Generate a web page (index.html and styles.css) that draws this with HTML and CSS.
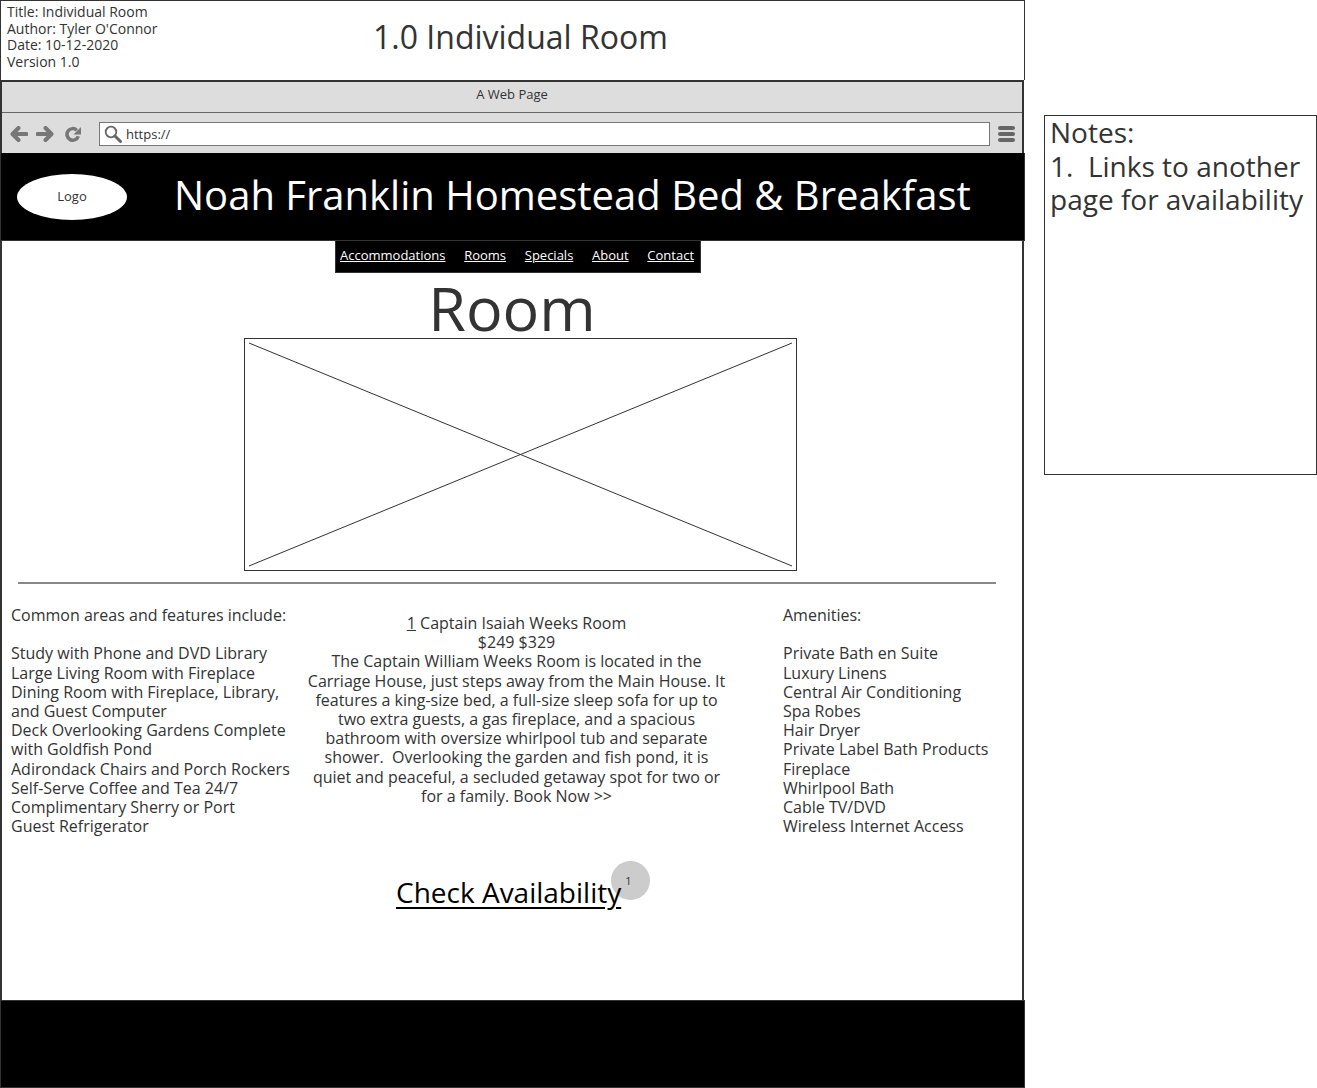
FILE: index.html
```html
<!DOCTYPE html>
<html lang="en">
<head>
    <meta charset="UTF-8">
    <meta name="viewport" content="width=device-width, initial-scale=1.0">
    <title>1.0 Individual Room</title>
    <link rel="stylesheet" href="styles.css">
</head>
<body>
<div class="sheet">
    <div class="wire">
        <!-- Document info -->
        <div class="doc-head">
            <div class="doc-meta">
                <div>Title: Individual Room</div>
                <div>Author: Tyler O'Connor</div>
                <div>Date: 10-12-2020</div>
                <div>Version 1.0</div>
            </div>
            <div class="doc-title">1.0 Individual Room</div>
        </div>

        <div class="browser">
            <div class="title-bar">A Web Page</div>
            <div class="tool-bar">
                <svg class="tool-icon" width="18" height="16" viewBox="0 0 18 16"><path d="M8.500 2 2.500 8l6 6M3 8h13.500" fill="none" stroke="#777" stroke-width="4" stroke-linecap="round" stroke-linejoin="round"/></svg>
                <svg class="tool-icon fwd" width="18" height="16" viewBox="0 0 18 16"><path d="M9.500 2l6 6-6 6M15 8H1.500" fill="none" stroke="#777" stroke-width="4" stroke-linecap="round" stroke-linejoin="round"/></svg>
                <svg class="tool-icon reload" width="16" height="16" viewBox="0 0 16 16"><path d="M13.300 10.200A5.800 5.800 0 1 1 11.800 4.200" fill="none" stroke="#777" stroke-width="3.500"/><path d="M16 1v7.500H8.500z" fill="#777"/></svg>
                <div class="address">
                    <svg width="18" height="18" viewBox="0 0 18 18"><circle cx="7" cy="7" r="5.300" fill="none" stroke="#666" stroke-width="1.800"/><path d="M11 11l5.500 5.500" stroke="#666" stroke-width="3" stroke-linecap="round"/></svg>
                    <span>https://</span>
                </div>
                <div class="menu-icon"><i></i><i></i><i></i></div>
            </div>

            <div class="site-head">
                <div class="logo">Logo</div>
                <div class="site-name">Noah Franklin Homestead Bed &amp; Breakfast</div>
            </div>
            <nav class="nav">
                <a>Accommodations</a>
                <a>Rooms</a>
                <a>Specials</a>
                <a>About</a>
                <a>Contact</a>
            </nav>

            <h1 class="room-title">Room</h1>
            <div class="photo">
                <svg width="100%" height="100%" viewBox="0 0 551 231" preserveAspectRatio="none"><path d="M4 4 547 227M547 4 4 227" stroke="#333" stroke-width="1" fill="none"/></svg>
            </div>
            <hr class="rule">

            <div class="columns">
                <div class="col-left">
                    Common areas and features include:<br><br>
                    Study with Phone and DVD Library<br>
                    Large Living Room with Fireplace<br>
                    Dining Room with Fireplace, Library, and Guest Computer<br>
                    Deck Overlooking Gardens Complete with Goldfish Pond<br>
                    Adirondack Chairs and Porch Rockers<br>
                    Self-Serve Coffee and Tea 24/7<br>
                    Complimentary Sherry or Port<br>
                    Guest Refrigerator
                </div>
                <div class="col-mid">
                    <u>1</u> Captain Isaiah Weeks Room<br>
                    $249 $329<br>
                    The Captain William Weeks Room is located in the Carriage House, just steps away from the Main House. It features a king-size bed, a full-size sleep sofa for up to two extra guests, a gas fireplace, and a spacious bathroom with oversize whirlpool tub and separate shower.&nbsp; Overlooking the garden and fish pond, it is quiet and peaceful, a secluded getaway spot for two or for a family. Book Now &gt;&gt;
                </div>
                <div class="col-right">
                    Amenities:<br><br>
                    Private Bath en Suite<br>
                    Luxury Linens<br>
                    Central Air Conditioning<br>
                    Spa Robes<br>
                    Hair Dryer<br>
                    Private Label Bath Products<br>
                    Fireplace<br>
                    Whirlpool Bath<br>
                    Cable TV/DVD<br>
                    Wireless Internet Access
                </div>
            </div>

            <div class="cta">
                <a class="cta-link">Check Availability<span class="badge">1</span></a>
            </div>

            <div class="site-foot"></div>
        </div>
    </div>

    <aside class="notes">
        Notes:<br>
        1.&nbsp; Links to another page for availability
    </aside>
</div>
</body>
</html>
```

FILE: styles.css
```css
body {
    margin: 0;
    font-family: "Open Sans", sans-serif;
    color: #333;
    background-color: #fff;
}
.sheet {
    display: flex;
    align-items: flex-start;
    width: 1317px;
    height: 1088px;
    overflow: hidden;
}
.wire {
    width: 1025px;
    flex: none;
}

/* Document info */
.doc-head {
    display: flex;
    box-sizing: border-box;
    height: 80px;
    border: 1px solid #333;
    border-bottom: none;
}
.doc-meta {
    width: 366px;
    padding: 3px 0 0 6px;
    font-size: 14px;
    line-height: 16.7px;
}
.doc-title {
    padding-top: 14px;
    font-size: 32px;
    line-height: 44px;
}

/* Browser window */
.browser {
    box-sizing: border-box;
    width: 1024px;
    border-left: 2px solid #333;
    border-right: 2px solid #333;
    border-top: 2px solid #333;
}
.title-bar {
    box-sizing: border-box;
    height: 31px;
    padding-top: 3px;
    background-color: #ddd;
    border-bottom: 1px solid #666;
    font-size: 13px;
    line-height: 18px;
    text-align: center;
}
.tool-bar {
    display: flex;
    align-items: center;
    box-sizing: border-box;
    height: 40px;
    padding: 2px 0 0 8px;
    background-color: #ddd;
}
.tool-icon {
    flex: none;
    margin-right: 8px;
}
.tool-icon.fwd {
    margin-right: 11px;
}
.tool-icon.reload {
    margin-right: 10px;
}
.address {
    display: flex;
    align-items: center;
    gap: 4px;
    box-sizing: border-box;
    width: 891px;
    height: 24px;
    margin-left: 8px;
    padding-left: 4px;
    background-color: #fff;
    border: 1px solid #777;
    font-size: 13px;
}
.address svg {
    flex: none;
}
.menu-icon {
    display: flex;
    flex-direction: column;
    gap: 2px;
    margin-left: 8px;
}
.menu-icon i {
    display: block;
    width: 17px;
    height: 4px;
    border-radius: 2px;
    background-color: #666;
}

/* Site header */
.site-head {
    display: flex;
    align-items: center;
    box-sizing: border-box;
    width: 1024px;
    height: 88px;
    margin-left: -1px;
    padding-left: 16px;
    background-color: #000;
    border-bottom: 1px solid #333;
    border-right: 1px solid #333;
}
.logo {
    display: flex;
    align-items: center;
    justify-content: center;
    flex: none;
    box-sizing: border-box;
    width: 110px;
    height: 46px;
    padding-bottom: 2px;
    border-radius: 50%;
    background-color: #fff;
    font-size: 13px;
}
.site-name {
    margin-left: 47px;
    padding-bottom: 4px;
    color: #fff;
    font-size: 40px;
    line-height: 54px;
}
.nav {
    display: flex;
    gap: 18.700px;
    box-sizing: border-box;
    width: 366px;
    height: 32px;
    margin: 0 0 0 333px;
    padding: 0 0 0 4px;
    background-color: #000;
    border: 1px solid #333;
    border-top: none;
    line-height: 29px;
    font-size: 13px;
    color: #fff;
}
.nav a {
    text-decoration: underline;
}
.room-title {
    margin: 0;
    height: 65px;
    font-size: 61px;
    font-weight: 400;
    line-height: 70px;
    text-align: center;
}
.photo {
    box-sizing: border-box;
    width: 553px;
    height: 233px;
    margin-left: 242px;
    border: 1px solid #333;
}
.photo svg {
    display: block;
}
.rule {
    width: 978px;
    height: 2px;
    margin: 11px 0 0 16px;
    border: none;
    background-color: #888;
}

/* Three text columns */
.columns {
    display: flex;
    height: 289px;
    font-size: 16px;
    line-height: 19.200px;
}
.col-left {
    box-sizing: border-box;
    width: 305px;
    padding: 22px 0 0 9px;
}
.col-mid {
    box-sizing: border-box;
    width: 419px;
    padding-top: 30px;
    text-align: center;
}
.col-right {
    box-sizing: border-box;
    padding: 22px 0 0 57px;
}

.cta {
    height: 127px;
    padding-left: 394px;
    font-size: 28px;
    line-height: 38px;
    color: #000;
}
.cta-link {
    position: relative;
    isolation: isolate;
    display: inline-block;
    text-decoration: underline;
    text-decoration-thickness: 2px;
    text-underline-offset: 4px;
}
.badge {
    position: absolute;
    z-index: -1;
    top: -12px;
    left: 215px;
    box-sizing: border-box;
    width: 39px;
    height: 39px;
    padding-right: 4px;
    border-radius: 50%;
    background-color: #ccc;
    color: #333;
    font-size: 11px;
    line-height: 39px;
    text-align: center;
}
.site-foot {
    box-sizing: border-box;
    width: 1024px;
    height: 88px;
    margin-left: -1px;
    background-color: #000;
    border-top: 1px solid #333;
    border-right: 1px solid #333;
    border-bottom: 1px solid #333;
}

/* Notes panel */
.notes {
    box-sizing: border-box;
    width: 273px;
    height: 360px;
    margin: 115px 0 0 19px;
    padding: 0 4px 0 5px;
    border: 1px solid #333;
    font-size: 28px;
    line-height: 33.500px;
}
```
